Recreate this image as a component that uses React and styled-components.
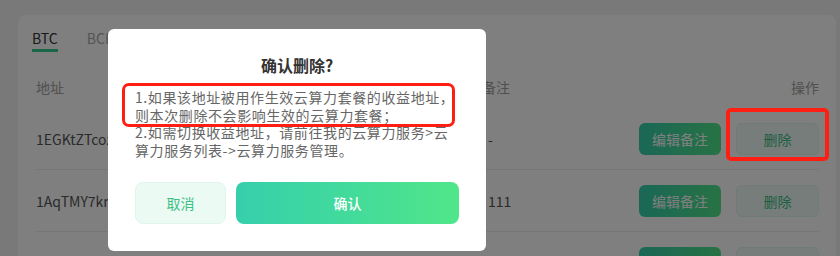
import React from "react";
import styled, { createGlobalStyle } from "styled-components";

const Global = createGlobalStyle`
  html, body { margin: 0; padding: 0; }
  body {
    background: #f2f3f5;
    font-family: "Noto Sans CJK SC", "Noto Sans", sans-serif;
    overflow: hidden;
  }
  * { box-sizing: border-box; }
`;

const Page = styled.div`
  width: 840px;
  height: 256px;
  padding: 15px 4px 0 18px;
  overflow: hidden;
`;

const Card = styled.div`
  background: #ffffff;
  border-radius: 8px;
  padding: 13px 17px 0 14px;
  height: 400px;
`;

const Tabs = styled.div`
  display: flex;
  gap: 29px;
`;

const Tab = styled.div`
  font-size: 14px;
  line-height: 20px;
  padding-bottom: 1px;
  color: ${(p) => (p.$active ? "#333333" : "#a8a8a8")};
  border-bottom: 3px solid ${(p) => (p.$active ? "#34c98f" : "transparent")};
`;

const Table = styled.div`
  margin-top: 14px;
  padding-left: 4px;
`;

const Row = styled.div`
  display: grid;
  grid-template-columns: 446px 1fr auto;
  align-items: center;
  height: ${(p) => (p.$head ? "42px" : "62px")};
  border-bottom: ${(p) => (p.$head ? "none" : "1px solid #ececec")};
  font-size: 14px;
  color: ${(p) => (p.$head ? "#a0a0a0" : "#555555")};
`;

const Cell = styled.div`
  white-space: nowrap;
  overflow: hidden;
  padding-left: ${(p) => p.$pl || 0}px;
  text-align: ${(p) => (p.$right ? "right" : "left")};
`;

const Actions = styled.div`
  display: flex;
  gap: 15px;
`;

const EditBtn = styled.button`
  width: 82px;
  height: 32px;
  border: none;
  border-radius: 6px;
  background: linear-gradient(90deg, #34cfac, #50e58a);
  color: #ffffff;
  font-family: inherit;
  font-size: 14px;
  padding: 0;
`;

const DelBtn = styled.button`
  width: 83px;
  height: 32px;
  border: 1px solid #e2f6ec;
  border-radius: 6px;
  background: #eefaf4;
  color: #3dbf86;
  font-family: inherit;
  font-size: 14px;
  padding: 0;
`;

const Overlay = styled.div`
  position: fixed;
  inset: 0;
  background: rgba(0, 0, 0, 0.5);
  padding: 29px 0 0 108px;
`;

const Modal = styled.div`
  position: relative;
  width: 378px;
  background: #ffffff;
  border-radius: 6px;
  padding: 24px 27px 27px;
`;

const Title = styled.div`
  text-align: center;
  font-size: 16px;
  font-weight: 700;
  line-height: 24px;
  color: #333333;
`;

const Body = styled.div`
  margin-top: 12px;
  font-size: 14px;
  line-height: 17.5px;
  letter-spacing: 0.6px;
  color: #666666;
`;

const Buttons = styled.div`
  display: flex;
  gap: 10px;
  margin-top: 23px;
`;

const Cancel = styled.button`
  width: 91px;
  height: 42px;
  border: 1px solid #e0f6ec;
  border-radius: 8px;
  background: #ecfaf4;
  color: #3cbf86;
  font-family: inherit;
  font-size: 14px;
  padding: 0;
`;

const Confirm = styled.button`
  flex: 1;
  height: 42px;
  border: none;
  border-radius: 8px;
  background: linear-gradient(90deg, #35cfac, #50e68a);
  color: #ffffff;
  font-family: inherit;
  font-size: 14px;
  font-weight: 500;
  padding: 0;
`;

const Highlight = styled.div`
  position: absolute;
  left: ${(p) => p.$x}px;
  top: ${(p) => p.$y}px;
  width: ${(p) => p.$w}px;
  height: ${(p) => p.$h}px;
  border: ${(p) => p.$b}px solid #ff1e12;
  border-radius: ${(p) => p.$r}px;
  pointer-events: none;
`;

const PageMark = styled(Highlight)`
  position: fixed;
`;

const rows = [
  { addr: "1EGKtZTcozzKdHQ9Lh3kn5jPq8wXvRt2a", remark: "-" },
  { addr: "1AqTMY7kmPd4Hn2s9cLwBfXe6Vr3ZyQu8", remark: "111" },
  { addr: "1BvNp8QrT5sK3mWz7YdLcXa2Fh9Ge4Jk", remark: "-" },
];

export default function App() {
  return (
    <>
      <Global />
      <Page>
        <Card>
          <Tabs>
            <Tab $active>BTC</Tab>
            <Tab>BCH</Tab>
            <Tab>LTC</Tab>
          </Tabs>
          <Table>
            <Row $head>
              <Cell>地址</Cell>
              <Cell>备注</Cell>
              <Cell $right>操作</Cell>
            </Row>
            {rows.map((r) => (
              <Row key={r.addr}>
                <Cell>{r.addr}</Cell>
                <Cell $pl={6}>{r.remark}</Cell>
                <Actions>
                  <EditBtn>编辑备注</EditBtn>
                  <DelBtn>删除</DelBtn>
                </Actions>
              </Row>
            ))}
          </Table>
        </Card>
      </Page>
      <Overlay>
        <Modal>
          <Title>确认删除?</Title>
          <Body>
            <div>1.如果该地址被用作生效云算力套餐的收益地址，则本次删除不会影响生效的云算力套餐；</div>
            <div>2.如需切换收益地址，请前往我的云算力服务&gt;云算力服务列表-&gt;云算力服务管理。</div>
          </Body>
          <Buttons>
            <Cancel>取消</Cancel>
            <Confirm>确认</Confirm>
          </Buttons>
          <Highlight $x={14} $y={54} $w={333} $h={44} $b={3.5} $r={7} />
        </Modal>
      </Overlay>
      <PageMark $x={726} $y={108} $w={103} $h={53} $b={4} $r={5} />
    </>
  );
}
